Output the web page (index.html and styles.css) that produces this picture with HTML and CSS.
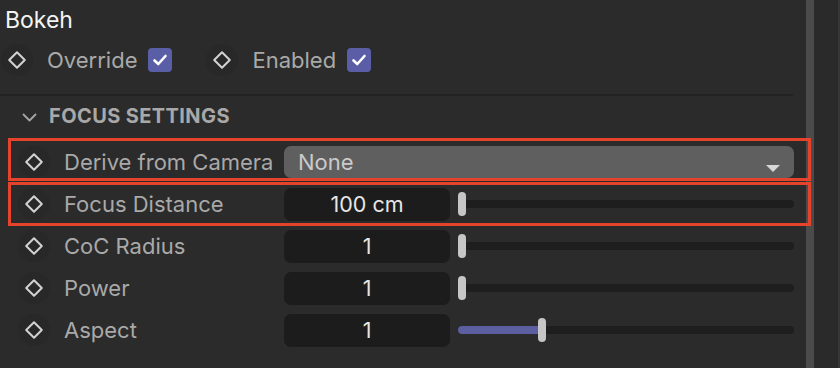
FILE: index.html
```html
<!DOCTYPE html>
<html lang="en">
<head>
    <meta charset="UTF-8">
    <title>Bokeh</title>
    <link rel="stylesheet" href="styles.css">
</head>
<body>

<div class="panel">
    <div class="main">
        <h1 class="title">Bokeh</h1>

        <div class="toggles">
            <div class="toggle">
                <span class="key"><svg width="20" height="20" viewBox="0 0 20 20"><path d="M10 2.2 L17.8 10 L10 17.8 L2.2 10 Z" fill="none" stroke="#d2d2d2" stroke-width="2" stroke-linejoin="round"/></svg></span>
                <span class="toggle-label">Override</span>
                <span class="check"><svg width="24" height="24" viewBox="0 0 24 24"><path d="M6.5 12.5 L10.3 16 L17.5 8" fill="none" stroke="#fff" stroke-width="2.6" stroke-linecap="round" stroke-linejoin="round"/></svg></span>
            </div>
            <div class="toggle">
                <span class="key"><svg width="20" height="20" viewBox="0 0 20 20"><path d="M10 2.2 L17.8 10 L10 17.8 L2.2 10 Z" fill="none" stroke="#d2d2d2" stroke-width="2" stroke-linejoin="round"/></svg></span>
                <span class="toggle-label">Enabled</span>
                <span class="check"><svg width="24" height="24" viewBox="0 0 24 24"><path d="M6.5 12.5 L10.3 16 L17.5 8" fill="none" stroke="#fff" stroke-width="2.6" stroke-linecap="round" stroke-linejoin="round"/></svg></span>
            </div>
        </div>

        <div class="divider"></div>

        <div class="section-head">
            <svg class="chevron" width="15" height="9" viewBox="0 0 15 9"><path d="M1.5 1.5 L7.5 7.5 L13.5 1.5" fill="none" stroke="#a6a6a6" stroke-width="1.8" stroke-linecap="round" stroke-linejoin="round"/></svg>
            <span>FOCUS SETTINGS</span>
        </div>

        <div class="props">
            <div class="prop">
                <span class="highlight hl-a"></span>
                <span class="key"><svg width="20" height="20" viewBox="0 0 20 20"><path d="M10 2.2 L17.8 10 L10 17.8 L2.2 10 Z" fill="none" stroke="#d2d2d2" stroke-width="2" stroke-linejoin="round"/></svg></span>
                <span class="prop-label">Derive from Camera</span>
                <div class="dropdown"><span>None</span><span class="caret"></span></div>
            </div>
            <div class="prop">
                <span class="highlight hl-b"></span>
                <span class="key"><svg width="20" height="20" viewBox="0 0 20 20"><path d="M10 2.2 L17.8 10 L10 17.8 L2.2 10 Z" fill="none" stroke="#d2d2d2" stroke-width="2" stroke-linejoin="round"/></svg></span>
                <span class="prop-label">Focus Distance</span>
                <div class="number">100 cm</div>
                <div class="slider"><span class="thumb" style="left: 0px"></span></div>
            </div>
            <div class="prop">
                <span class="key"><svg width="20" height="20" viewBox="0 0 20 20"><path d="M10 2.2 L17.8 10 L10 17.8 L2.2 10 Z" fill="none" stroke="#d2d2d2" stroke-width="2" stroke-linejoin="round"/></svg></span>
                <span class="prop-label">CoC Radius</span>
                <div class="number">1</div>
                <div class="slider"><span class="thumb" style="left: 0px"></span></div>
            </div>
            <div class="prop">
                <span class="key"><svg width="20" height="20" viewBox="0 0 20 20"><path d="M10 2.2 L17.8 10 L10 17.8 L2.2 10 Z" fill="none" stroke="#d2d2d2" stroke-width="2" stroke-linejoin="round"/></svg></span>
                <span class="prop-label">Power</span>
                <div class="number">1</div>
                <div class="slider"><span class="thumb" style="left: 0px"></span></div>
            </div>
            <div class="prop">
                <span class="key"><svg width="20" height="20" viewBox="0 0 20 20"><path d="M10 2.2 L17.8 10 L10 17.8 L2.2 10 Z" fill="none" stroke="#d2d2d2" stroke-width="2" stroke-linejoin="round"/></svg></span>
                <span class="prop-label">Aspect</span>
                <div class="number">1</div>
                <div class="slider"><span class="fill" style="width: 84px"></span><span class="thumb" style="left: 80px"></span></div>
            </div>
        </div>
    </div>
    <div class="scrollbar"></div>
    <div class="gutter"></div>
</div>

</body>
</html>
```

FILE: styles.css
```css
/* dark attribute manager panel */
body {
    margin: 0;
    background-color: #2b2b2b;
    font-family: Inter, "Liberation Sans", sans-serif;
}
.panel {
    display: flex;
    height: 368px;
    overflow: hidden;
}
.main {
    width: 806px;
    flex-shrink: 0;
}
.title {
    margin: 6px 0 0 5px;
    font-size: 23px;
    line-height: 28px;
    font-weight: 400;
    color: #f4f4f4;
}
.toggles {
    display: flex;
    align-items: center;
    gap: 34px;
    height: 32px;
    margin-top: 10px;
    padding-left: 1px;
}
.toggle {
    display: flex;
    align-items: center;
}
.key {
    width: 32px;
    height: 32px;
    border-radius: 50%;
    background-color: #282828;
    display: flex;
    align-items: center;
    justify-content: center;
    flex-shrink: 0;
}
.toggle-label {
    margin-left: 14px;
    font-size: 22px;
    color: #a9a9a9;
}
.check {
    margin-left: 11px;
    width: 24px;
    height: 24px;
    border-radius: 4px;
    background-color: #5a5ea6;
    display: flex;
}
.divider {
    margin-top: 18px;
    width: 793px;
    height: 2px;
    background-color: #222222;
}
.section-head {
    height: 39px;
    display: flex;
    align-items: center;
    gap: 12px;
    padding-left: 22px;
    color: #a8a8a8;
    font-size: 20px;
    font-weight: 700;
    letter-spacing: 0.4px;
}
.chevron {
    margin-top: 3px;
}
.props {
    padding: 6px 0 0 11px;
}
.prop {
    position: relative;
    display: flex;
    align-items: center;
    width: 783px;
    height: 42px;
}
.prop .key {
    margin-left: 7px;
}
.prop-label {
    margin-left: 14px;
    width: 220px;
    flex-shrink: 0;
    font-size: 22px;
    color: #a9a9a9;
}
.dropdown {
    flex: 1;
    height: 32px;
    border-radius: 7px;
    background-color: #5f5f5f;
    display: flex;
    align-items: center;
    justify-content: space-between;
    padding: 0 14px;
    color: #cacaca;
    font-size: 22px;
}
.caret {
    margin-top: 12px;
    border-left: 7px solid transparent;
    border-right: 7px solid transparent;
    border-top: 7px solid #d8d8d8;
}
.number {
    width: 166px;
    height: 33px;
    line-height: 33px;
    border-radius: 7px;
    background-color: #1c1c1c;
    color: #e6e6e6;
    text-align: center;
    font-size: 21.5px;
    flex-shrink: 0;
}
.slider {
    position: relative;
    flex: 1;
    height: 8px;
    margin-left: 8px;
    border-radius: 4px;
    background-color: #1e1e1e;
}
.fill {
    position: absolute;
    left: 0;
    top: 0;
    bottom: 0;
    border-radius: 4px;
    background-color: #5b5e9f;
}
.thumb {
    position: absolute;
    top: -8px;
    width: 8px;
    height: 24px;
    border-radius: 4px;
    background-color: #c6c6c6;
}
.highlight {
    position: absolute;
    left: -3px;
    right: -17px;
    border: 3px solid #e5432c;
    z-index: 2;
}
.hl-a {
    top: -3px;
    bottom: 2px;
}
.hl-b {
    top: -1px;
    bottom: -1px;
}
.scrollbar {
    width: 8px;
    flex-shrink: 0;
    background-color: #4b4b4b;
}
.gutter {
    flex: 1;
    background-color: #2a2a2a;
    border-right: 2px solid #363636;
}
```
